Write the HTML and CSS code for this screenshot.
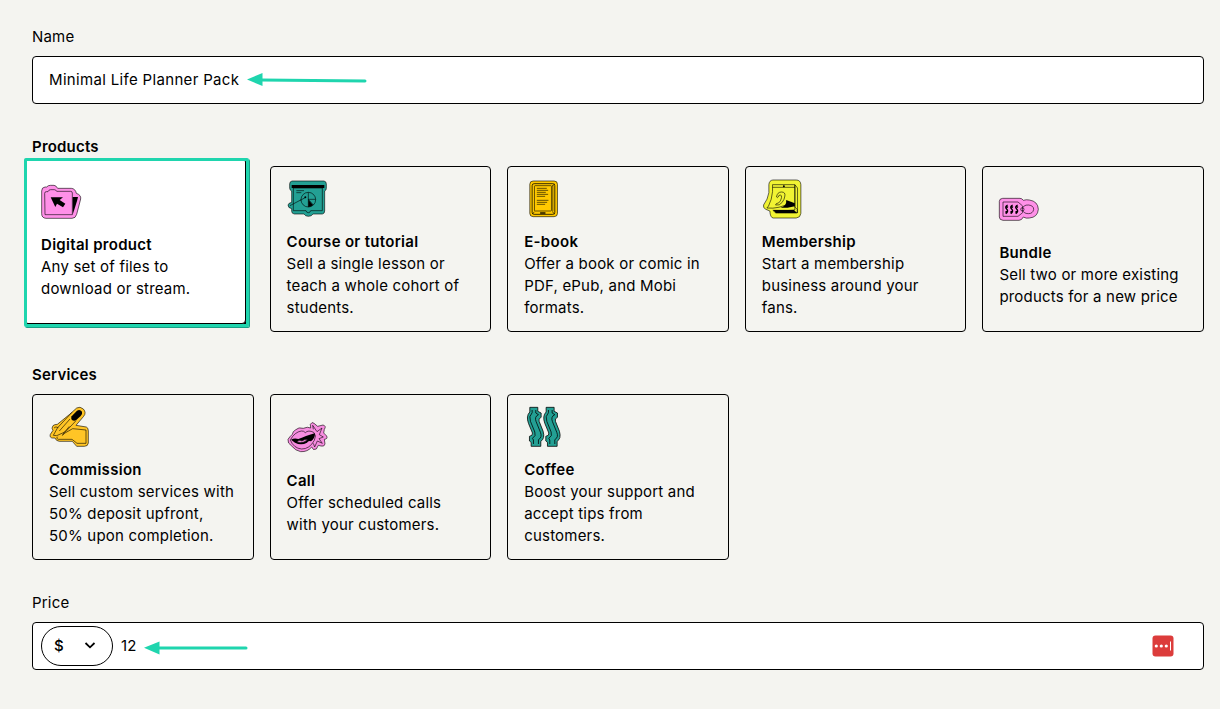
FILE: index.html
```html
<!DOCTYPE html>
<html lang="en">
<head>
  <meta charset="UTF-8">
  <meta name="viewport" content="width=device-width, initial-scale=1.0">
  <title>New product</title>
  <link rel="stylesheet" href="styles.css">
</head>
<body>
  <form class="product-form">
    <!-- Name -->
    <section class="form-group">
      <label class="label">Name</label>
      <div class="input">
        <span class="name-value">Minimal Life Planner Pack</span>
        <svg class="arrow arrow-name" width="120" height="16" viewBox="0 0 120 16">
          <path d="M14 8 118 9" stroke="#1fd5ae" stroke-width="3" stroke-linecap="round"/>
          <path d="M0 7.5 15.5 1v13z" fill="#1fd5ae"/>
        </svg>
      </div>
    </section>

    <!-- Products -->
    <section class="form-group">
      <div class="label bold">Products</div>
      <div class="cards">
        <div class="card selected">
          <svg class="icon" viewBox="21 18 120 120">
            <path class="pink" d="M23 45Q23 34 33 33H38Q42 28 49 28H60Q66 28 71 37H112Q124 38 127 52Q142 57 140 69L128 115Q125 127 114 127H36Q23 126 23 113z"/>
            <path class="pink" d="M32 52Q32 47 37 47H42Q44 41 50 41H61Q66 41 68 46H110Q115 46 115 51V116H33z"/>
            <path d="M116 63h16l-3 12-13 41z"/>
            <path d="M50 64h37l-10 8 17 11-7 11-18-11-5 10z"/>
          </svg>
          <div class="card-text">
            <h4>Digital product</h4>
            <p>Any set of files to<br>download or stream.</p>
          </div>
          <span class="highlight"></span>
        </div>

        <div class="card">
          <svg class="icon" viewBox="20 21 120 120">
            <path class="teal" d="M35 27H131Q138 28 138 36V49Q138 55 133 57V117Q133 125 126 126H98Q94 133 84 133Q75 133 71 126H42Q34 125 34 118V110Q23 108 23 99Q24 93 34 91V57Q28 55 28 48V36Q28 28 35 27z"/>
            <path class="teal" d="M39 48H126V116H91Q90 122 84 122Q78 122 77 116H39z"/>
            <path d="M34 39H132V48H34z"/>
            <path class="line" d="M48 56h23M48 62h15M76 76 29 101"/>
            <circle class="teal" cx="84" cy="83" r="22"/>
            <path class="line" d="M84 61V105M84 82H106M84 82 99 99M76 76 60 85"/>
            <path d="M84 83 98 99Q92 105 84 105z"/>
            <circle cx="75" cy="76" r="3"/>
          </svg>
          <div class="card-text">
            <h4>Course or tutorial</h4>
            <p>Sell a single lesson or<br>teach a whole cohort of<br>students.</p>
          </div>
        </div>

        <div class="card">
          <svg class="icon" viewBox="18.6 21 120 120">
            <rect class="gold" x="36" y="27" width="83" height="107" rx="10"/>
            <rect class="gold thick" x="43" y="35" width="68" height="92" rx="6"/>
            <rect class="gold" x="50" y="41" width="51" height="76" rx="2"/>
            <path class="line" d="M105 40V118M111 36 103 42M44 126 50 119M111 126 103 119"/>
            <path class="line" d="M57 49h30M57 55h34M57 61h27M57 67h34M57 73h25M57 85h35M57 91h31M57 97h25"/>
            <path d="M67 121h16v4H67z"/>
          </svg>
          <div class="card-text">
            <h4>E-book</h4>
            <p>Offer a book or comic in<br>PDF, ePub, and Mobi<br>formats.</p>
          </div>
        </div>

        <div class="card">
          <svg class="icon" viewBox="20.4 21 120 120">
            <path class="yellow" d="M53 24H123Q136 24 137 38V124Q136 137 123 138H54Q45 137 44 117L32 112Q23 108 25 99Q38 82 41 62V38Q42 25 53 24z"/>
            <path class="yellow" d="M52 38H119V105L126 112V123H62L53 115H98L119 114V39"/>
            <path class="line" d="M119 38 127 48V123M52 46H119M52 38V59Q50 83 40 102L35 108Q71 112 108 91"/>
            <path d="M76 107Q95 102 93 84L119 94V103L97 107zM54 114H116L126 123H62z"/>
            <circle cx="86" cy="43" r="3"/>
            <path class="line" d="M64 75Q66 60 79 60Q91 60 89 72Q88 82 81 91Q73 102 61 99Q62 93 70 93Q77 88 79 77Q80 69 75 69Q70 69 69 75Q66 79 64 75z"/>
          </svg>
          <div class="card-text">
            <h4>Membership</h4>
            <p>Start a membership<br>business around your<br>fans.</p>
          </div>
        </div>

        <div class="card">
          <svg class="icon" viewBox="28 15 120 120">
            <path class="pink" d="M39 40H91Q97 40 101 46Q110 43 119 45Q145 49 146 73Q144 97 119 99Q109 101 101 96Q96 106 88 106H40Q29 105 29 96V49Q29 41 39 40z"/>
            <path class="pink" d="M40 51H85L99 63V83L85 94H40z"/>
            <path class="pink" d="M98 73Q100 59 117 60Q132 62 132 73Q130 86 116 86Q101 86 98 73z"/>
            <circle class="line" cx="98" cy="73" r="5"/>
            <g class="squiggle">
              <path d="M54 60Q44 65 51 72T48 86M50 64l5 3M47 82l5-3"/>
              <path d="M69 60Q59 65 66 72T63 86M65 64l5 3M62 82l5-3"/>
              <path d="M84 60Q74 65 81 72T78 86M80 64l5 3M77 82l5-3"/>
            </g>
          </svg>
          <div class="card-text">
            <h4>Bundle</h4>
            <p>Sell two or more existing<br>products for a new price</p>
          </div>
        </div>
      </div>
    </section>

    <!-- Services -->
    <section class="form-group">
      <div class="label bold">Services</div>
      <div class="cards">
        <div class="card">
          <svg class="icon" viewBox="21 21 120 120">
            <path class="amber" d="M104 24Q114 18 124 27Q134 38 125 49L102 76L133 81Q139 83 139 93V129Q138 139 127 139H104L91 124H52Q42 123 39 114H31Q22 113 25 103L33 91Q27 85 33 77Q38 73 46 73L83 43z"/>
            <path class="line" d="M34 106 47 83 90 37M34 106 44 107 71 95 102 62"/>
            <path class="line" d="M36 84Q41 78 49 83M47 110Q40 115 49 118H90L105 130H132V90L92 86L69 99L61 106L67 97L82 79M84 57 52 93"/>
            <path d="M89 49 105 32Q114 27 120 35Q122 41 116 48L102 61Q95 64 89 59Q86 54 89 49z"/>
          </svg>
          <div class="card-text">
            <h4>Commission</h4>
            <p>Sell custom services with<br>50% deposit upfront,<br>50% upon completion.</p>
          </div>
        </div>

        <div class="card">
          <svg class="icon" viewBox="20 24 120 120">
            <path class="orchid" d="M45 60Q55 50 69 55Q82 49 91 54L90 43Q95 34 101 40L112 49L128 45Q139 48 132 58L130 69L139 78Q143 87 132 88L134 102Q132 111 122 108L114 106L108 117Q98 123 94 111Q82 126 61 125Q45 122 35 109Q20 99 23 88Q28 80 36 73Q37 64 45 60z"/>
            <path class="orchid" d="M30 90Q43 66 63 63Q70 62 75 68Q84 59 100 67Q110 76 102 91Q88 117 64 117Q40 115 30 90z"/>
            <path d="M32 89Q42 83 54 87Q67 82 77 78Q91 74 104 70Q104 85 92 94Q84 91 80 98Q62 108 44 98z"/>
            <path class="orchid" d="M51 94Q59 88 65 93Q74 86 82 89Q69 102 51 97z"/>
            <path class="line" d="M99 58 97 46 110 65 125 54 117 74 129 81 116 86 126 100 111 93 103 111 99 100"/>
          </svg>
          <div class="card-text">
            <h4>Call</h4>
            <p>Offer scheduled calls<br>with your customers.</p>
          </div>
        </div>

        <div class="card">
          <svg class="icon" viewBox="18.6 21 120 120">
            <g id="steam">
              <path class="teal thick" d="M36 22H60V34L70 39V52Q61 55 64 64L76 94Q82 116 69 124V139H40V127L35 123V109Q46 107 44 99L32 70Q24 48 36 36z"/>
              <path class="line thick" d="M43 30V38Q32 49 38 64L51 96Q56 108 44 115L47 120V132"/>
              <path class="line thick" d="M54 30V39L62 44Q49 50 55 65L68 97Q74 112 62 119V132"/>
            </g>
            <use href="#steam" x="49"/>
          </svg>
          <div class="card-text">
            <h4>Coffee</h4>
            <p>Boost your support and<br>accept tips from<br>customers.</p>
          </div>
        </div>
      </div>
    </section>

    <!-- Price -->
    <section class="form-group">
      <label class="label">Price</label>
      <div class="input price">
        <div class="currency">
          <span>$</span>
          <svg width="12" height="8" viewBox="0 0 12 8"><path d="M1.5 1 6 5.3 10.5 1" fill="none" stroke="#000" stroke-width="1.8"/></svg>
        </div>
        <span class="price-value">12</span>
        <svg class="arrow arrow-price" width="104" height="16" viewBox="0 0 104 16">
          <path d="M14 8H102" stroke="#1fd5ae" stroke-width="3" stroke-linecap="round"/>
          <path d="M0 7.7 15.5 1.5v13z" fill="#1fd5ae"/>
        </svg>
        <svg class="password-icon" width="22" height="22" viewBox="0 0 22 22">
          <rect x=".5" y=".5" width="21" height="21" rx="3" fill="#dc3c3b"/>
          <g fill="#fff"><circle cx="4.3" cy="11" r="1.6"/><circle cx="9.3" cy="11" r="1.6"/><circle cx="14.3" cy="11" r="1.6"/><path d="M18 6.5h1v9h-1z"/></g>
        </svg>
      </div>
    </section>
  </form>
</body>
</html>
```
FILE: styles.css
```css
* {
  box-sizing: border-box;
}

body {
  margin: 0;
  background-color: #f4f4f0;
  color: #000;
  font-family: Inter, "Liberation Sans", sans-serif;
  font-size: 15px;
  letter-spacing: 0.2px;
  line-height: 22px;
}

h4, p {
  margin: 0;
  font-size: inherit;
  white-space: nowrap;
}

h4, .bold {
  font-weight: 600;
  letter-spacing: 0.3px;
}

.label.bold {
  letter-spacing: 0.2px;
}

.product-form {
  display: flex;
  flex-direction: column;
  gap: 32px;
  padding: 26px 16px 0 32px;
}

.form-group {
  display: flex;
  flex-direction: column;
  gap: 8px;
}

.label {
  height: 22px;
}

.input {
  display: flex;
  align-items: center;
  height: 48px;
  padding: 0 16px;
  background-color: #fff;
  border: 1px solid #000;
  border-radius: 4px;
}

.name-value {
  width: 190px;
  letter-spacing: 0.33px;
  white-space: nowrap;
}

/* Type cards */
.cards {
  display: grid;
  grid-template-columns: repeat(5, minmax(0, 1fr));
  gap: 16px;
}

.card {
  display: flex;
  flex-direction: column;
  justify-content: center;
  gap: 12px;
  height: 166px;
  padding: 0 16px;
  border: 1px solid #000;
  border-radius: 4px;
}

.card.selected {
  position: relative;
  background-color: #fff;
  transform: translate(-8px, -8px);
  box-shadow: 3px 3px 0 #000;
}

.highlight {
  position: absolute;
  top: -1px;
  left: -1px;
  right: -4px;
  bottom: -4px;
  border: 3px solid #1fd5ae;
  border-radius: 2px;
  box-shadow: 1px 1px 0 #17a085;
}

/* Icons */
.icon {
  width: 40px;
  height: 40px;
  overflow: visible;
}

.pink, .teal, .gold, .yellow, .amber, .orchid, .line {
  stroke: #000;
  stroke-width: 1.8;
}

.pink { fill: #ff90e8; }
.teal { fill: #23a094; }
.gold { fill: #ffc900; }
.yellow { fill: #f1f333; }
.amber { fill: #ffc526; }
.orchid { fill: #f78de0; }
.line { fill: none; }

.thick {
  stroke-width: 2.3;
}

.squiggle {
  fill: none;
  stroke: #000;
  stroke-width: 4;
}

/* Arrows */
.arrow {
  flex: none;
}

.arrow-name {
  margin-left: 8px;
}

.arrow-price {
  margin: 3px 0 0 7px;
}

/* Price */
.input.price {
  padding: 0 29px 0 8px;
}

.currency {
  display: flex;
  align-items: center;
  justify-content: space-between;
  width: 72px;
  height: 40px;
  padding: 0 16px 0 12px;
  border: 1px solid #000;
  border-radius: 20px;
  font-weight: 500;
}

.price-value {
  width: 16px;
  margin-left: 8px;
}

.password-icon {
  margin-left: auto;
}
```
